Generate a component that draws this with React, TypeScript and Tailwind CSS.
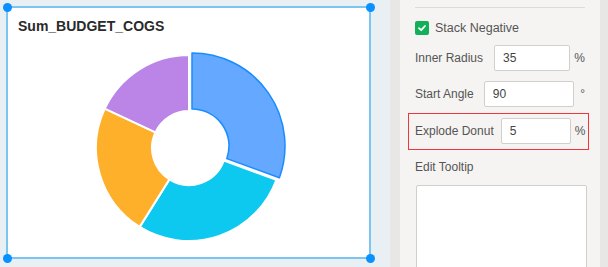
import React from 'react';

type Slice = { start: number; end: number; fill: string; stroke: string; strokeWidth: number; dx: number; dy: number };

const slices: Slice[] = [
  { start: 0, end: 110, fill: '#64a8ff', stroke: '#1a8cff', strokeWidth: 1.5, dx: 3, dy: -2 },
  { start: 110, end: 212, fill: '#0dc8ef', stroke: '#ffffff', strokeWidth: 2, dx: 0, dy: 0 },
  { start: 212, end: 295, fill: '#ffb02b', stroke: '#ffffff', strokeWidth: 2, dx: 0, dy: 0 },
  { start: 295, end: 360, fill: '#bb85e8', stroke: '#ffffff', strokeWidth: 2, dx: 0, dy: 0 },
];

function pt(cx: number, cy: number, r: number, a: number) {
  const rad = (a * Math.PI) / 180;
  return [cx + r * Math.sin(rad), cy - r * Math.cos(rad)];
}

function arcPath(s: Slice) {
  const cx = 100;
  const cy = 100;
  const R = 93;
  const r = 37;
  const large = s.end - s.start > 180 ? 1 : 0;
  const [x1, y1] = pt(cx, cy, R, s.start);
  const [x2, y2] = pt(cx, cy, R, s.end);
  const [x3, y3] = pt(cx, cy, r, s.end);
  const [x4, y4] = pt(cx, cy, r, s.start);
  return `M${x1} ${y1} A${R} ${R} 0 ${large} 1 ${x2} ${y2} L${x3} ${y3} A${r} ${r} 0 ${large} 0 ${x4} ${y4} Z`;
}

function Donut() {
  const ordered = [slices[1], slices[2], slices[3], slices[0]];
  return (
    <svg width="200" height="200" viewBox="0 0 200 200">
      {ordered.map((s) => (
        <path
          key={s.start}
          d={arcPath(s)}
          fill={s.fill}
          stroke={s.stroke}
          strokeWidth={s.strokeWidth}
          strokeLinejoin="round"
          transform={`translate(${s.dx} ${s.dy})`}
        />
      ))}
    </svg>
  );
}

function Handle({ className }: { className: string }) {
  return <div className={`absolute w-[9px] h-[9px] rounded-full bg-[#0a90ff] ${className}`} />;
}

function NumberRow({ label, value, unit, inputClass, unitClass }: { label: string; value: string; unit: string; inputClass: string; unitClass: string }) {
  return (
    <div className="flex items-center">
      <span className="whitespace-nowrap">{label}</span>
      <div className={`h-[26px] flex items-center pl-[8px] bg-white border border-[#d2cfca] rounded-[2px] text-[#444] ${inputClass}`}>
        {value}
      </div>
      <span className={unitClass}>{unit}</span>
    </div>
  );
}

export default function App() {
  return (
    <div className="flex w-[608px] h-[267px] overflow-hidden" style={{ fontFamily: '"Liberation Sans", Arial, sans-serif' }}>
      {/* Canvas */}
      <div className="w-[390px] h-full bg-[#e8f0f4] pl-[6px] pt-[6px]">
        <div className="relative w-[365px] h-[253px] bg-white border-2 border-[#7cc4f3]">
          <Handle className="-left-[5.5px] -top-[5.5px]" />
          <Handle className="-right-[5.5px] -top-[5.5px]" />
          <Handle className="-left-[5.5px] -bottom-[5.5px]" />
          <Handle className="-right-[5.5px] -bottom-[5.5px]" />
          <div className="pl-[10px] pt-[10px] text-[14px] leading-[16px] font-bold text-[#2a2a2a]">Sum_BUDGET_COGS</div>
          <div className="flex justify-center mt-[14px]">
            <Donut />
          </div>
        </div>
      </div>

      {/* Divider strip */}
      <div className="w-[10px] h-full bg-[#e8e7e5]" />

      {/* Properties panel */}
      <div className="w-[200px] h-full bg-[#f5f4f2] pt-[7px] px-[15px] text-[12px] leading-[14px] text-[#555]">
        <div className="h-px bg-[#dcdbd8]" />
        <div className="flex items-center mt-[13px]">
          <div className="w-[14px] h-[14px] rounded-[2px] bg-[#13b05a] flex items-center justify-center">
            <svg width="10" height="10" viewBox="0 0 10 10">
              <path d="M2 5.2 L4.2 7.2 L8 3" fill="none" stroke="#fff" strokeWidth="1.8" strokeLinecap="round" strokeLinejoin="round" />
            </svg>
          </div>
          <span className="ml-[6px] text-[12.5px]">Stack Negative</span>
        </div>
        <div className="mt-[10px]">
          <NumberRow label="Inner Radius" value="35" unit="%" inputClass="ml-[11px] w-[78px]" unitClass="ml-[4px]" />
        </div>
        <div className="mt-[10px]">
          <NumberRow label="Start Angle" value="90" unit="°" inputClass="ml-[10px] w-[92px] h-[25px]" unitClass="ml-[6px]" />
        </div>
        <div className="mt-[6px] -ml-[7px] w-[181px] border border-[#f0363a] pl-[6px] pr-[1px] pt-[4px] pb-[5px]">
          <NumberRow label="Explode Donut" value="5" unit="%" inputClass="ml-[7px] w-[70px] h-[25px]" unitClass="ml-[4px]" />
        </div>
        <div className="mt-[10px]">Edit Tooltip</div>
        <div className="mt-[11px] ml-px w-[171px] h-[100px] bg-white border border-[#d2cfca] rounded-[2px]" />
      </div>

      <div className="w-[8px] h-full bg-[#e8e7e5]" />
    </div>
  );
}
